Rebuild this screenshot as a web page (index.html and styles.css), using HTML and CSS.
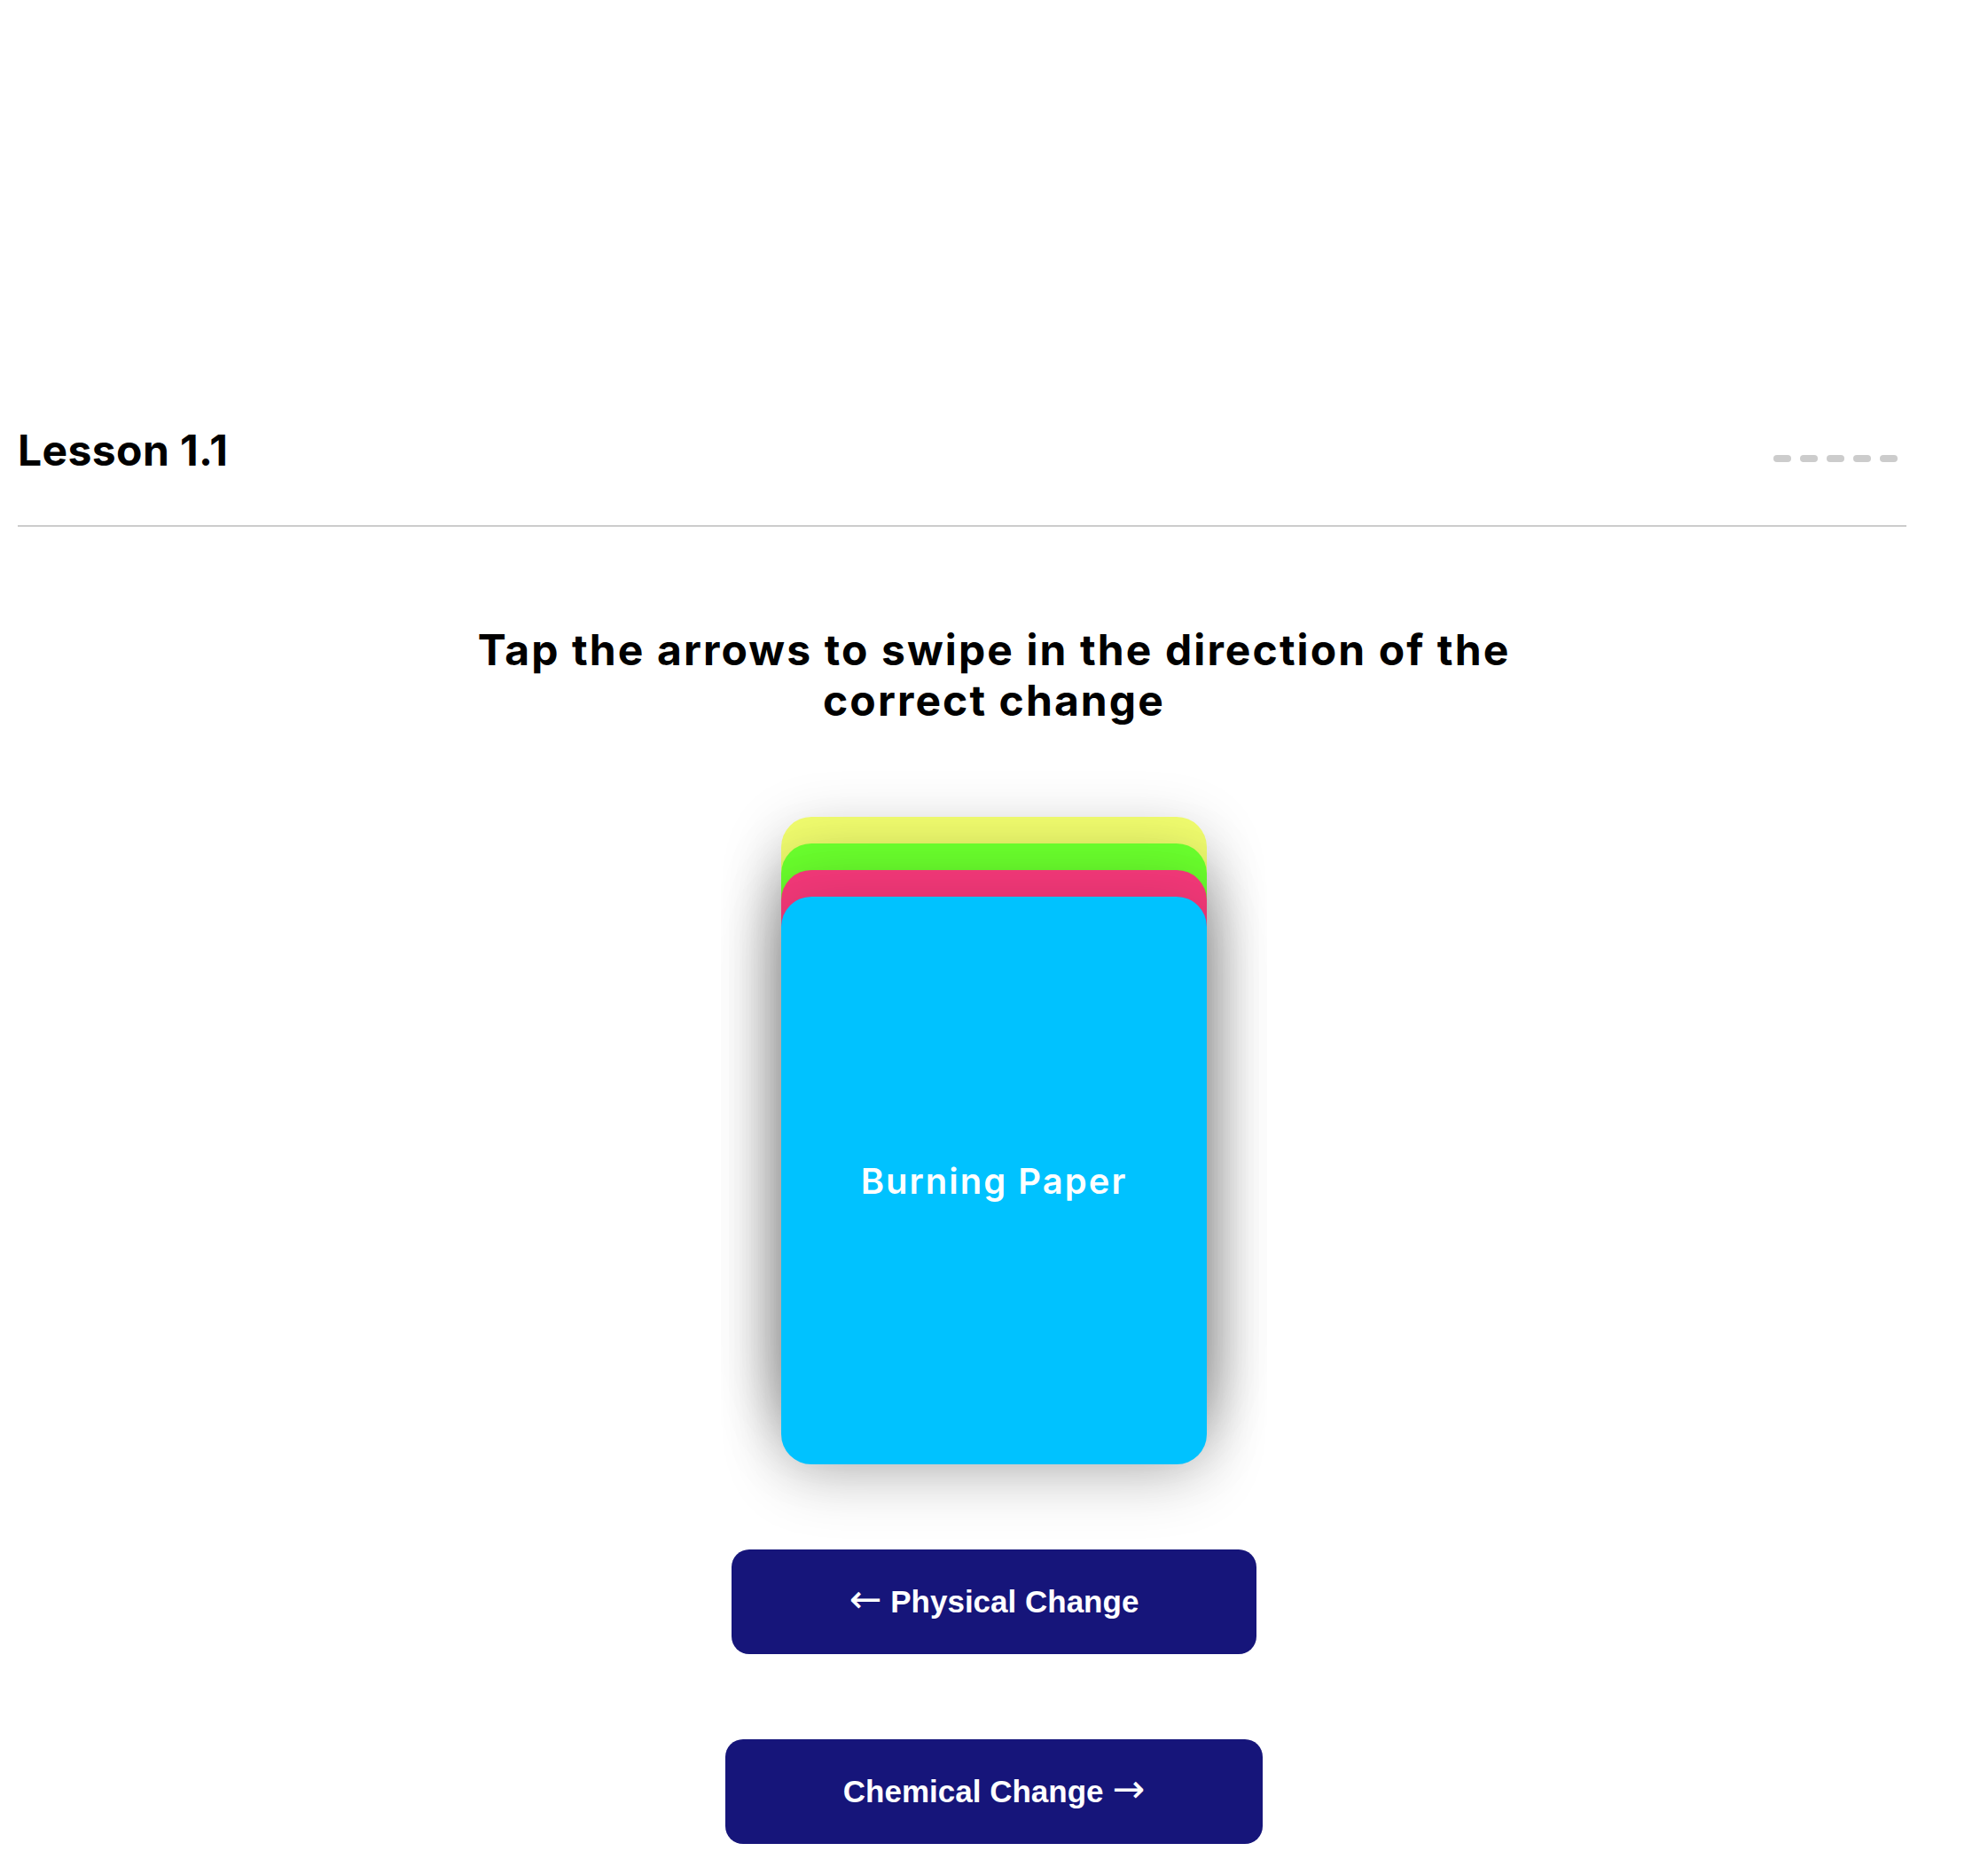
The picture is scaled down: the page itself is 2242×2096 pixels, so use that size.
FILE: index.html
```html
<!DOCTYPE html>
<html lang="en">
<head>
<meta charset="utf-8">
<title>Lesson 1.1</title>
<link rel="stylesheet" href="styles.css">
</head>
<body>
<div class="page">
  <header class="topbar">
    <h1 class="lesson-title">Lesson 1.1</h1>
    <div class="progress">
      <span class="dash"></span>
      <span class="dash"></span>
      <span class="dash"></span>
      <span class="dash"></span>
      <span class="dash"></span>
    </div>
  </header>
  <main class="content">
    <h2 class="instructions">Tap the arrows to swipe in the direction of the<br>correct change</h2>
    <div class="stack">
      <div class="card card-yellow"></div>
      <div class="card card-green"></div>
      <div class="card card-pink"></div>
      <div class="card card-blue"><span class="card-label">Burning Paper</span></div>
    </div>
    <div class="actions">
      <button class="choice"><span class="arrow">&larr;</span> Physical Change</button>
      <button class="choice">Chemical Change <span class="arrow">&rarr;</span></button>
    </div>
  </main>
</div>
</body>
</html>
```
FILE: styles.css
```css
html, body {
  margin: 0;
  padding: 0;
  background: #ffffff;
}

body {
  font-family: Inter, "Noto Sans", sans-serif;
  color: #000000;
  overflow: hidden;
}

.page {
  padding-top: 478px;
}

.topbar {
  display: flex;
  justify-content: space-between;
  align-items: center;
  margin: 0 92px 0 20px;
  padding-bottom: 54px;
  border-bottom: 2px solid #cccccc;
}

.lesson-title {
  margin: 0;
  font-size: 48px;
  line-height: 60px;
  font-weight: 700;
  letter-spacing: 0.4px;
}

.progress {
  display: flex;
  gap: 10px;
  padding-right: 10px;
  margin-top: 18px;
}

.dash {
  width: 20px;
  height: 8px;
  border-radius: 4px;
  background: #cccccc;
}

.content {
  display: flex;
  flex-direction: column;
  align-items: center;
}

.instructions {
  margin: 110px 0 0 0;
  font-size: 48px;
  line-height: 57px;
  font-weight: 700;
  text-align: center;
  letter-spacing: 2.1px;
}

.stack {
  display: grid;
  width: 480px;
  margin-top: 103px;
}

.card {
  grid-area: 1 / 1;
  height: 640px;
  border-radius: 34px;
  box-shadow: 0 16px 70px rgba(0, 0, 0, 0.19);
}

.card-yellow {
  background: #f0fc6e;
  margin-top: 0;
}

.card-green {
  background: #6aff2d;
  margin-top: 30px;
}

.card-pink {
  background: #f23878;
  margin-top: 60px;
}

.card-blue {
  background: #00c2ff;
  margin-top: 90px;
  display: flex;
  align-items: center;
  justify-content: center;
}

.card-label {
  color: #ffffff;
  font-size: 40px;
  font-weight: 600;
  letter-spacing: 2px;
}

.actions {
  display: flex;
  flex-direction: column;
  align-items: center;
  gap: 96px;
  margin-top: 96px;
}

.choice {
  border: none;
  margin: 0;
  background: #16157a;
  color: #ffffff;
  border-radius: 20px;
  padding: 39px 133px;
  font-family: "Liberation Sans", Arial, sans-serif;
  font-size: 35px;
  line-height: 40px;
  font-weight: 700;
  cursor: pointer;
}

.arrow {
  font-family: "DejaVu Sans", sans-serif;
  font-weight: 400;
  font-size: 44px;
  line-height: 0;
}
```
